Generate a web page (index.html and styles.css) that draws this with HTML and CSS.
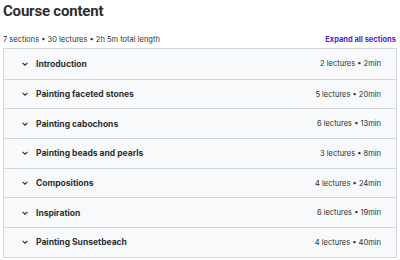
FILE: index.html
```html
<!DOCTYPE html>
<html>
<head>
  <title>Course content</title>
  <link rel="stylesheet" href="styles.css">
</head>
<body>
  <h2 class="title">Course content</h2>

  <div class="summary">
    <span>7 sections • 30 lectures • 2h 5m total length</span>
    <button class="expand">Expand all sections</button>
  </div>

  <div class="sections">
    <div class="section">
      <span class="chev"><svg viewBox="0 0 10 10" width="8" height="8"><path d="M2 3.5 L5 6.5 L8 3.5" fill="none" stroke="#2d2f31" stroke-width="1.4"/></svg></span>
      <span class="name">Introduction</span>
      <span class="meta">2 lectures • 2min</span>
    </div>
    <div class="section">
      <span class="chev"><svg viewBox="0 0 10 10" width="8" height="8"><path d="M2 3.5 L5 6.5 L8 3.5" fill="none" stroke="#2d2f31" stroke-width="1.4"/></svg></span>
      <span class="name">Painting faceted stones</span>
      <span class="meta">5 lectures • 20min</span>
    </div>
    <div class="section">
      <span class="chev"><svg viewBox="0 0 10 10" width="8" height="8"><path d="M2 3.5 L5 6.5 L8 3.5" fill="none" stroke="#2d2f31" stroke-width="1.4"/></svg></span>
      <span class="name">Painting cabochons</span>
      <span class="meta">6 lectures • 13min</span>
    </div>
    <div class="section">
      <span class="chev"><svg viewBox="0 0 10 10" width="8" height="8"><path d="M2 3.5 L5 6.5 L8 3.5" fill="none" stroke="#2d2f31" stroke-width="1.4"/></svg></span>
      <span class="name">Painting beads and pearls</span>
      <span class="meta">3 lectures • 8min</span>
    </div>
    <div class="section">
      <span class="chev"><svg viewBox="0 0 10 10" width="8" height="8"><path d="M2 3.5 L5 6.5 L8 3.5" fill="none" stroke="#2d2f31" stroke-width="1.4"/></svg></span>
      <span class="name">Compositions</span>
      <span class="meta">4 lectures • 24min</span>
    </div>
    <div class="section">
      <span class="chev"><svg viewBox="0 0 10 10" width="8" height="8"><path d="M2 3.5 L5 6.5 L8 3.5" fill="none" stroke="#2d2f31" stroke-width="1.4"/></svg></span>
      <span class="name">Inspiration</span>
      <span class="meta">6 lectures • 19min</span>
    </div>
    <div class="section">
      <span class="chev"><svg viewBox="0 0 10 10" width="8" height="8"><path d="M2 3.5 L5 6.5 L8 3.5" fill="none" stroke="#2d2f31" stroke-width="1.4"/></svg></span>
      <span class="name">Painting Sunsetbeach</span>
      <span class="meta">4 lectures • 40min</span>
    </div>
  </div>
</body>
</html>
```

FILE: styles.css
```css
*, *::before, *::after {
  box-sizing: border-box;
  margin: 0;
  padding: 0;
}

body {
  font-family: Inter, "Noto Sans", sans-serif;
  background-color: #ffffff;
  color: #2d2f31;
  padding: 1px 3px 0 3px;
}

.title {
  font-family: Roboto, "Liberation Sans", sans-serif;
  font-size: 15px;
  font-weight: 700;
  line-height: 20px;
  letter-spacing: -0.2px;
}

.summary {
  display: flex;
  justify-content: space-between;
  align-items: center;
  margin-top: 10px;
  height: 16px;
  font-size: 7.5px;
  color: #2d2f31;
}

.expand {
  background: none;
  border: none;
  font-family: inherit;
  font-size: 7.5px;
  font-weight: 700;
  color: #5624d0;
  padding-right: 1px;
  cursor: pointer;
}

.sections {
  margin-top: 1px;
  border: 1px solid #d1d7dc;
}

.section {
  display: flex;
  align-items: center;
  height: 29.7px;
  padding: 0 15px 0 17px;
  background-color: #f7f9fa;
  border-top: 1px solid #d1d7dc;
}

.section:first-child {
  border-top: none;
}

.chev {
  display: flex;
  width: 15px;
}

.name {
  flex: 1;
  font-size: 8.5px;
  font-weight: 700;
}

.meta {
  font-size: 7.5px;
  color: #2d2f31;
}
```
